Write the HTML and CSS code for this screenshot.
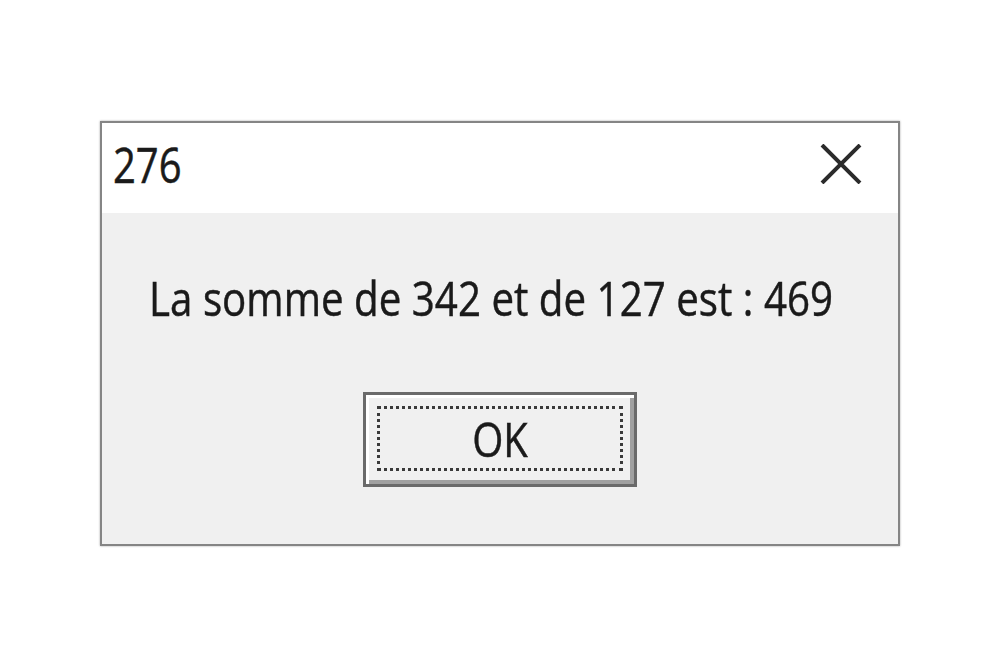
FILE: index.html
```html
<!DOCTYPE html>
<html lang="fr">
<head>
    <meta charset="UTF-8">
    <meta name="viewport" content="width=device-width, initial-scale=1.0">
    <title>276</title>
    <link rel="stylesheet" href="styles.css">
</head>
<body>
    <div class="dialog">
        <div class="titlebar">
            <span class="title">276</span>
            <span class="close">
                <svg width="42" height="40" viewBox="0 0 42 40">
                    <path d="M2 1 L40 39 M40 1 L2 39" stroke="#2b2b2b" stroke-width="4" fill="none"/>
                </svg>
            </span>
        </div>
        <div class="content">
            <p class="message">La somme de 342 et de 127 est : 469</p>
            <div class="actions">
                <button class="btn"><span class="focus"><span class="label">OK</span></span></button>
            </div>
        </div>
    </div>
</body>
</html>
```

FILE: styles.css
```css
html, body {
    margin: 0;
    height: 100%;
}
body {
    background: #fff;
    font-family: "Open Sans", "Noto Sans", Arial, sans-serif;
    color: #1a1a1a;
    display: flex;
    align-items: center;
    justify-content: center;
}
.dialog {
    width: 800px;
    height: 425px;
    box-sizing: border-box;
    border: 2px solid #858585;
    box-shadow: 0 0 2px rgba(0, 0, 0, 0.35);
    background: #f0f0f0;
    display: flex;
    flex-direction: column;
    filter: blur(0.6px);
}
.titlebar {
    height: 90px;
    background: #fff;
    display: flex;
    align-items: center;
    justify-content: space-between;
    padding: 0 36px 0 11px;
}
.title {
    font-size: 40px;
    margin-top: -6px;
    transform: scaleY(1.22);
    -webkit-text-stroke: 0.4px #1a1a1a;
}
.close {
    display: flex;
    margin-top: -7px;
}
.content {
    flex: 1;
    display: flex;
    flex-direction: column;
}
.message {
    margin: 58px 0 0 47px;
    font-size: 40.3px;
    line-height: 54px;
    transform: scaleY(1.2);
    transform-origin: left center;
    -webkit-text-stroke: 0.4px #1a1a1a;
}
.actions {
    display: flex;
    justify-content: center;
    margin-top: 67px;
}
.btn {
    width: 274px;
    height: 95px;
    box-sizing: border-box;
    padding: 0;
    background: #f0f0f0;
    border: 3px solid #6a6a6a;
    box-shadow: inset 3px 3px 0 #fff, inset -4px -4px 0 #a0a0a0;
    font-family: inherit;
    color: #1a1a1a;
    display: flex;
    align-items: stretch;
    cursor: pointer;
}
.focus {
    flex: 1;
    margin: 11px 11px 13px 11px;
    border: 3px dotted #3a3a3a;
    display: flex;
    align-items: center;
    justify-content: center;
}
.label {
    font-size: 40px;
    transform: scaleY(1.2);
    -webkit-text-stroke: 0.4px #1a1a1a;
}
```
